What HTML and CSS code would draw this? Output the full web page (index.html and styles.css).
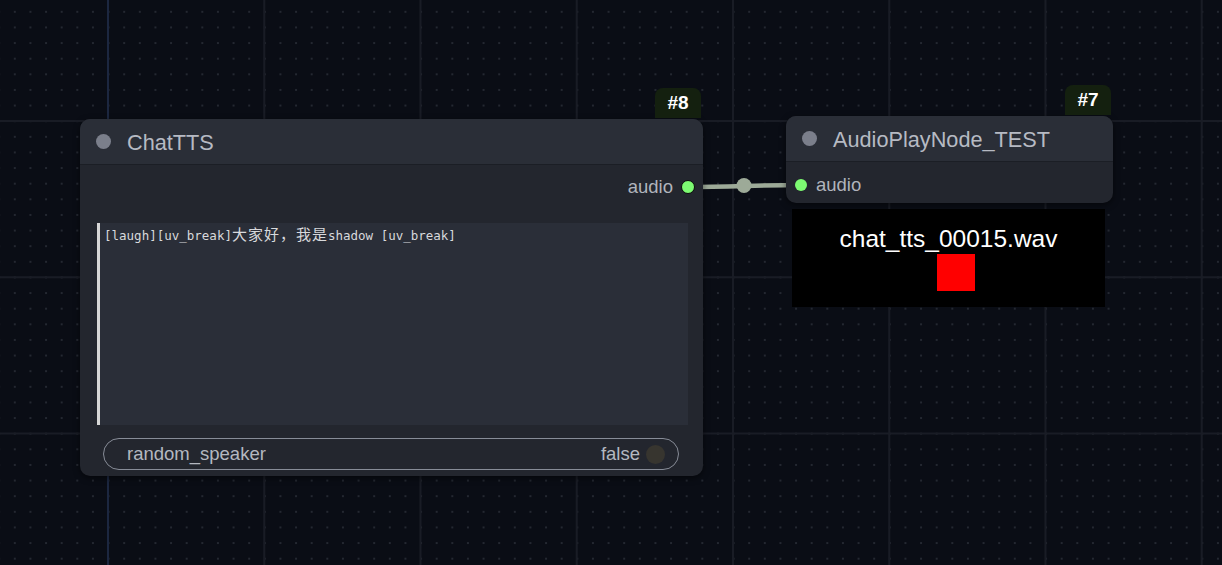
FILE: index.html
```html
<!DOCTYPE html>
<html>
<head>
<meta charset="utf-8">
<link rel="stylesheet" href="styles.css">
</head>
<body>
<div class="canvas">
  <svg class="links" width="1222" height="565" viewBox="0 0 1222 565">
    <path d="M687 187 C 730 187, 760 185, 801 185" class="link"/>
    <circle cx="744" cy="185.5" r="7.5" class="link-mid"/>
  </svg>

  <div class="node node-chat">
    <div class="badge">#8</div>
    <div class="node-title"><span class="title-dot"></span><span>ChatTTS</span></div>
    <div class="node-body chat-body">
      <div class="slot slot-out"><span>audio</span><span class="port port-out"></span></div>
      <div class="textarea">[laugh][uv_break]<span class="cjk">大家好，我是</span>shadow [uv_break]</div>
      <div class="toggle">
        <span class="toggle-label">random_speaker</span>
        <span class="toggle-value">false</span>
        <span class="toggle-knob"></span>
      </div>
    </div>
  </div>

  <div class="node node-audio">
    <div class="badge">#7</div>
    <div class="node-title"><span class="title-dot"></span><span>AudioPlayNode_TEST</span></div>
    <div class="node-body audio-body">
      <div class="slot slot-in"><span class="port port-in"></span><span>audio</span></div>
    </div>
  </div>

  <div class="preview">
    <div class="preview-name">chat_tts_00015.wav</div>
    <div class="preview-stop"></div>
  </div>
</div>
</body>
</html>
```

FILE: styles.css
```css
html, body {
  margin: 0;
  padding: 0;
}
body {
  width: 1222px;
  height: 565px;
  overflow: hidden;
  font-family: "Liberation Sans", Arial, sans-serif;
}
.canvas {
  position: relative;
  width: 1222px;
  height: 565px;
  background-color: #0a0d15;
  background-image:
    linear-gradient(to right, #1c2740 0, #1c2740 2px, transparent 2px),
    linear-gradient(to right, #191c25 0, #191c25 2px, transparent 2px),
    linear-gradient(to bottom, #191c25 0, #191c25 2px, transparent 2px),
    radial-gradient(circle, #242831 0, #242831 1.1px, transparent 1.5px);
  background-size: 2px 565px, 156.25px 156.25px, 156.25px 156.25px, 15.625px 15.625px;
  background-repeat: no-repeat, repeat, repeat, repeat;
  background-position: 107px 0, 107px 0, 0 120px, 7px 4px;
}
.links {
  position: absolute;
  left: 0;
  top: 0;
}
.link {
  fill: none;
  stroke: #9daa98;
  stroke-width: 4.5;
}
.link-mid {
  fill: #9daa98;
}
.node {
  position: absolute;
  background: #23262e;
  border-radius: 10px;
  box-shadow: 0 2px 6px rgba(0, 0, 0, 0.5);
  color: #b2b6be;
}
.node-chat {
  left: 80px;
  top: 119px;
  width: 623px;
  height: 357px;
}
.node-audio {
  left: 786px;
  top: 116px;
  width: 327px;
  height: 87px;
}
.badge {
  position: absolute;
  right: 2px;
  top: -31px;
  width: 46px;
  height: 30px;
  background: #14200f;
  border-radius: 8px 8px 0 0;
  color: #ffffff;
  font-weight: bold;
  font-size: 19px;
  display: flex;
  align-items: center;
  justify-content: center;
}
.node-title {
  height: 45px;
  background: #2a2e37;
  border-bottom: 1px solid #1b1e25;
  border-radius: 10px 10px 0 0;
  display: flex;
  align-items: center;
  gap: 16px;
  padding-left: 16px;
  padding-top: 2px;
  box-sizing: border-box;
  height: 46px;
  font-size: 21.7px;
  color: #b6bac3;
}
.title-dot {
  width: 15px;
  height: 15px;
  border-radius: 50%;
  background: #7b7f8b;
  margin-top: -2px;
}
.node-body {
  display: flex;
  flex-direction: column;
}
.chat-body {
  padding: 10px 15px 0 17px;
}
.audio-body {
  padding: 11px 0 0 9px;
}
.slot {
  height: 24px;
  display: flex;
  align-items: center;
  font-size: 18.5px;
  color: #b0b4bc;
}
.slot-out {
  justify-content: flex-end;
  gap: 8px;
  margin-right: -7px;
}
.slot-in {
  gap: 9px;
}
.port {
  width: 12px;
  height: 12px;
  border-radius: 50%;
  background: #7dfb72;
  box-sizing: border-box;
}
.port-out {
  border: 1.5px solid #0a0a0a;
  width: 14px;
  height: 14px;
}
.textarea {
  margin-top: 24px;
  height: 202px;
  background: #2a2e38;
  border-left: 3px solid #d6d6d6;
  box-sizing: border-box;
  padding: 2px 4px;
  font-family: "DejaVu Sans Mono", "Noto Sans CJK SC", monospace;
  font-size: 12.5px;
  line-height: 18px;
  color: #d8d9dc;
}
.cjk {
  font-family: "Noto Sans CJK SC", sans-serif;
  font-size: 15px;
  letter-spacing: 1px;
}
.toggle {
  margin: 13px 9px 0 6px;
  height: 32px;
  box-sizing: border-box;
  border: 1.5px solid #878c97;
  border-radius: 16px;
  display: flex;
  align-items: center;
  padding: 0 13px 0 23px;
  font-size: 18.5px;
  color: #b4b8c0;
}
.toggle-label {
  flex: 1;
}
.toggle-value {
  margin-right: 6px;
}
.toggle-knob {
  width: 19px;
  height: 19px;
  border-radius: 50%;
  background: #37352f;
}
.preview {
  position: absolute;
  left: 792px;
  top: 209px;
  width: 313px;
  height: 98px;
  background: #000000;
  display: flex;
  flex-direction: column;
  align-items: center;
  padding-top: 16px;
  box-sizing: border-box;
}
.preview-name {
  color: #ffffff;
  font-size: 24.5px;
  line-height: 28px;
}
.preview-stop {
  margin-top: 1px;
  margin-left: 15px;
  width: 38px;
  height: 37px;
  background: #ff0000;
}
```
